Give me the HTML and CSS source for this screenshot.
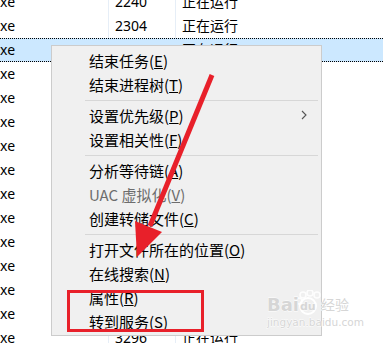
FILE: index.html
```html
<!DOCTYPE html>
<html lang="zh-CN">
<head>
  <meta charset="UTF-8">
  <title>任务管理器 - 右键菜单</title>
  <link rel="stylesheet" href="styles.css">
</head>
<body>

  <div class="list">
    <div class="row"><span class="name">xe</span><span class="pid">2240</span><span class="status">正在运行</span></div>
    <div class="row"><span class="name">xe</span><span class="pid">2304</span><span class="status">正在运行</span></div>
    <div class="row selected"><span class="name">xe</span><span class="pid">2340</span><span class="status">正在运行</span></div>
    <!-- rows under the menu: only the name column shows -->
    <div class="row"><span class="name">xe</span><span class="pid"></span><span class="status"></span></div>
    <div class="row"><span class="name">xe</span><span class="pid"></span><span class="status"></span></div>
    <div class="row"><span class="name">xe</span><span class="pid"></span><span class="status"></span></div>
    <div class="row"><span class="name">xe</span><span class="pid"></span><span class="status"></span></div>
    <div class="row"><span class="name">xe</span><span class="pid"></span><span class="status"></span></div>
    <div class="row"><span class="name">xe</span><span class="pid"></span><span class="status"></span></div>
    <div class="row"><span class="name">xe</span><span class="pid"></span><span class="status"></span></div>
    <div class="row"><span class="name">xe</span><span class="pid"></span><span class="status"></span></div>
    <div class="row"><span class="name">xe</span><span class="pid"></span><span class="status"></span></div>
    <div class="row"><span class="name">xe</span><span class="pid"></span><span class="status"></span></div>
    <div class="row"><span class="name">xe</span><span class="pid"></span><span class="status"></span></div>
    <div class="row"><span class="name">xe</span><span class="pid">3296</span><span class="status">正在运行</span></div>
  </div>

  <!-- context menu -->
  <div class="menu">
    <div class="item">结束任务(<u>E</u>)</div>
    <div class="item">结束进程树(<u>T</u>)</div>
    <div class="sep"></div>
    <div class="item">设置优先级(<u>P</u>)
      <svg class="sub" width="6" height="10" viewBox="0 0 6 10"><polyline points="1,1 5,5 1,9" fill="none" stroke="#555" stroke-width="1.1"/></svg>
    </div>
    <div class="item">设置相关性(<u>F</u>)</div>
    <div class="sep"></div>
    <div class="item">分析等待链(<u>A</u>)</div>
    <div class="item disabled">UAC 虚拟化(<u>V</u>)</div>
    <div class="item">创建转储文件(<u>C</u>)</div>
    <div class="sep"></div>
    <div class="item">打开文件所在的位置(<u>O</u>)</div>
    <div class="item">在线搜索(<u>N</u>)</div>
    <div class="item">属性(<u>R</u>)</div>
    <div class="item">转到服务(<u>S</u>)</div>
  </div>

  <!-- red annotations drawn over the screenshot -->
  <svg class="marks" width="383" height="343" viewBox="0 0 383 343">
    <line x1="212" y1="75" x2="150" y2="226" stroke="#e8202a" stroke-width="5"/>
    <polygon points="137,257 162,232 135,221" fill="#e8202a"/>
    <rect x="68.5" y="291.5" width="134" height="39" fill="none" stroke="#e8202a" stroke-width="3"/>
  </svg>

  <!-- baidu jingyan watermark -->
  <svg class="watermark" width="100" height="50" viewBox="0 0 100 50">
    <g fill="none" stroke="#fff" stroke-width="1.5" opacity="0.9">
      <circle cx="37" cy="5" r="3"/>
      <circle cx="44" cy="3" r="3"/>
      <circle cx="51" cy="5" r="3"/>
      <circle cx="33" cy="11" r="3"/>
    </g>
    <circle cx="42" cy="16" r="8" fill="none" stroke="#fff" stroke-width="2"/>
    <text x="1" y="21" class="wm-big">Bai</text>
    <text x="34" y="20" class="wm-du">du</text>
    <text x="55" y="20" class="wm-cn">经验</text>
    <text x="1" y="36" class="wm-url">jingyan.baidu.com</text>
  </svg>

</body>
</html>
```

FILE: styles.css
```css
body {
    margin: 0;
    width: 383px;
    height: 343px;
    overflow: hidden;
    background: #fff;
    position: relative;
    font-family: "Segoe UI", "Noto Sans", "Noto Sans CJK SC", sans-serif;
    color: #000;
}

.list {
    margin-top: -10px;
}

.row {
    display: flex;
    height: 24px;
    line-height: 24px;
    font-size: 14px;
    box-sizing: border-box;
}

.row .name {
    width: 108px;
    border-right: 1px solid #e6eef7;
}

.row .pid {
    width: 60px;
    padding-left: 6px;
    border-right: 1px solid #e6eef7;
}

.row .status {
    padding-left: 6px;
}

.row.selected {
    background: #cce8ff;
    border-top: 1px dotted #000;
    border-bottom: 1px dotted #000;
    line-height: 22px;
}

.row.selected span {
    border-right-color: transparent;
}

.menu {
    position: absolute;
    left: 51px;
    top: 45px;
    width: 265px;
    padding: 3px 2px 1px 2px;
    box-sizing: content-box;
    background: #f0f0f0;
    border: 1px solid #cccccc;
    font-family: "Noto Sans CJK SC", "Noto Sans", sans-serif;
    font-size: 15px;
}

.menu .item {
    height: 24px;
    line-height: 24px;
    padding-left: 35px;
    position: relative;
    white-space: nowrap;
}

.menu .item.disabled {
    color: #6d6d6d;
}

.menu .sub {
    position: absolute;
    right: 12px;
    top: 6px;
}

.menu .sep {
    height: 7px;
    margin-left: 31px;
    margin-right: 1px;
    background: linear-gradient(#d7d7d7, #d7d7d7) no-repeat 0 3px / 100% 1px;
}

.marks {
    position: absolute;
    left: 0;
    top: 0;
    pointer-events: none;
}

.watermark {
    position: absolute;
    left: 266px;
    top: 290px;
    pointer-events: none;
}

.watermark text {
    fill: #d6d6d6;
    stroke: #fff;
    stroke-width: 0.8;
    paint-order: stroke;
    font-family: "DejaVu Sans", sans-serif;
}

.wm-big {
    font-size: 18px;
    font-weight: bold;
}

.wm-du {
    font-size: 11px;
    font-weight: bold;
}

.wm-cn {
    font-size: 14px;
    font-family: "Noto Sans CJK SC", sans-serif !important;
}

.wm-url {
    font-size: 10.5px;
}
```
